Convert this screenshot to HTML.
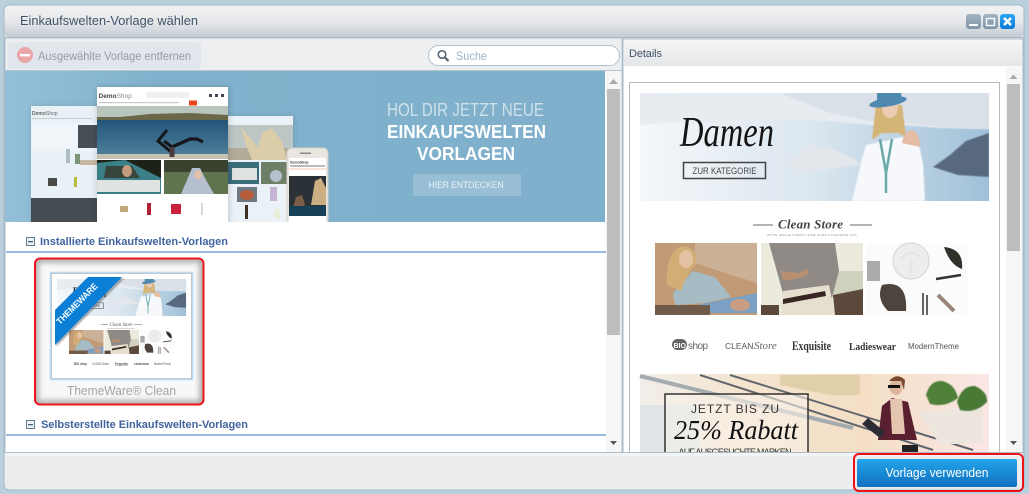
<!DOCTYPE html>
<html><head><meta charset="utf-8"><style>
html,body{margin:0;padding:0;width:1029px;height:494px;overflow:hidden;background:#bad1dd}
svg{display:block;font-family:"Liberation Sans",sans-serif}
</style></head><body>
<svg width="1029" height="494" viewBox="0 0 1029 494" xmlns="http://www.w3.org/2000/svg">
<defs>
<linearGradient id="tb" x1="0" y1="0" x2="0" y2="1"><stop offset="0" stop-color="#f1f2f3"/><stop offset=".5" stop-color="#e6e8ea"/><stop offset="1" stop-color="#c4ccd4"/></linearGradient>
<linearGradient id="tab" x1="0" y1="0" x2="0" y2="1"><stop offset="0" stop-color="#f6f6f7"/><stop offset="1" stop-color="#e5e6e8"/></linearGradient>
<linearGradient id="gc" x1="0" y1="0" x2="0" y2="1"><stop offset="0" stop-color="#a3b4c3"/><stop offset="1" stop-color="#7e94a8"/></linearGradient>
<linearGradient id="xc" x1="0" y1="0" x2="0" y2="1"><stop offset="0" stop-color="#2ba6f2"/><stop offset="1" stop-color="#0b7ad6"/></linearGradient>
<linearGradient id="btn" x1="0" y1="0" x2="0" y2="1"><stop offset="0" stop-color="#24a5ea"/><stop offset="1" stop-color="#0f6fc0"/></linearGradient>
<linearGradient id="sky" x1="0" y1="0" x2="1" y2="0"><stop offset="0" stop-color="#f8f9fb"/><stop offset=".5" stop-color="#e9eef3"/><stop offset="1" stop-color="#c5d7e5"/></linearGradient>
<linearGradient id="wat" x1="0" y1="0" x2="1" y2="0"><stop offset="0" stop-color="#f4f7fa"/><stop offset=".5" stop-color="#dbe6ef"/><stop offset="1" stop-color="#9fc0d8"/></linearGradient>
<linearGradient id="ban" x1="0" y1="0" x2="1" y2="0"><stop offset="0" stop-color="#93c0d8"/><stop offset=".25" stop-color="#82b2cd"/><stop offset="1" stop-color="#7fb0cb"/></linearGradient>
<linearGradient id="sea" x1="0" y1="0" x2="0" y2="1"><stop offset="0" stop-color="#25557a"/><stop offset="1" stop-color="#4d7f9a"/></linearGradient>
<linearGradient id="b2" x1="0" y1="0" x2="1" y2="0"><stop offset="0" stop-color="#f1eeea"/><stop offset=".3" stop-color="#f5e4cf"/><stop offset=".65" stop-color="#f4dfc6"/><stop offset="1" stop-color="#fbe6e6"/></linearGradient>
<filter id="s0" x="-5%" y="-5%" width="110%" height="110%"><feGaussianBlur stdDeviation=".35"/></filter>
<filter id="s1"><feGaussianBlur stdDeviation=".5"/></filter>
<filter id="s2"><feGaussianBlur stdDeviation="1.2"/></filter>
<filter id="s3" x="-20%" y="-20%" width="140%" height="140%"><feGaussianBlur stdDeviation="3"/></filter>
<clipPath id="cb"><rect x="5" y="71" width="600" height="151"/></clipPath>
<clipPath id="cd"><rect x="0" y="0" width="349" height="108"/></clipPath>
<clipPath id="cr"><rect x="630" y="83" width="369" height="369"/></clipPath>
<clipPath id="ct"><rect x="35" y="259" width="168" height="145" rx="5"/></clipPath>
<g id="damen" clip-path="url(#cd)">
  <rect width="349" height="108" fill="url(#wat)"/>
  <path d="M0 0H349V36L300 35 263 32 230 32 190 28 120 26 90 32 50 28 0 32Z" fill="#e7ecf0" filter="url(#s1)"/>
  <path d="M140 0H349V36L300 34 268 30 230 28 190 20Z" fill="#dae0e7" filter="url(#s1)"/>
  <path d="M145 70L170 52 190 55 215 66 220 72 190 76 160 78Z" fill="#e3e6ea" filter="url(#s1)"/>
  <path d="M293 74L310 62 326 48 349 40V84L318 82Z" fill="#58697f" filter="url(#s1)"/>
  <path d="M212 108L222 66 226 52 245 48 262 44 279 52 283 70 285 108Z" fill="#f6f8fb" filter="url(#s1)"/>
  <path d="M232 47L236 12H262L266 44 258 40H242Z" fill="#d5b478" filter="url(#s1)"/>
  <ellipse cx="250" cy="15" rx="8" ry="10" fill="#ecccb2"/>
  <path d="M262 50Q264 38 272 37 280 40 280 54Z" fill="#e4bda4"/>
  <path d="M237 0H261L262 8H237Z" fill="#4f89b0"/>
  <ellipse cx="248" cy="9" rx="19" ry="4.500" fill="#4f89b0" transform="rotate(-10 248 9)"/>
  <path d="M240 46L246 80 252 46M246 80V100" fill="none" stroke="#6aa9aa" stroke-width="2.500"/>
  <text x="40" y="53" font-family="'Liberation Serif',serif" font-style="italic" font-size="42" fill="#141414" textLength="94" lengthAdjust="spacingAndGlyphs">Damen</text>
  <rect x="43.500" y="69.500" width="82" height="16" fill="none" stroke="#444" stroke-width="1.500"/>
  <text x="84.500" y="81" font-size="9.500" fill="#444" text-anchor="middle" textLength="64" lengthAdjust="spacingAndGlyphs">ZUR KATEGORIE</text>
</g>
<g id="p1" filter="url(#s0)">
  <rect width="102" height="72" fill="#c19a76"/>
  <path d="M40 0H102V40L70 30 40 20Z" fill="#cbb197"/>
  <path d="M18 50L38 28 60 34 76 54 50 60 20 62Z" fill="#a6bcc4"/>
  <path d="M12 42Q10 8 28 3 46 6 40 22 30 34 26 48Z" fill="#d2ae76"/>
  <ellipse cx="31" cy="16" rx="7" ry="9" fill="#e4c1a2"/>
  <path d="M42 62L102 50V70L55 70Z" fill="#7c9fc4"/>
  <rect y="62" width="55" height="10" fill="#6f5a48"/>
  <ellipse cx="85" cy="62" rx="10" ry="6" fill="#c99d82"/>
</g>
<g id="p2" filter="url(#s0)">
  <rect width="102" height="72" fill="#ece9dd"/>
  <path d="M66 28H102V55H66Z" fill="#d0d2bf"/>
  <path d="M8 0H74L78 28 70 58H24L18 36Z" fill="#8f8a86"/>
  <path d="M22 48L68 42 74 72H20Z" fill="#e6dfcf"/>
  <path d="M22 56L64 48 65 53 22 61Z" fill="#372820"/>
  <path d="M20 28L38 30 46 26 48 31 40 35 22 38Z" fill="#b98f72"/>
  <rect y="62" width="18" height="10" fill="#5a4a3a"/>
  <path d="M72 52L102 46V72H74Z" fill="#5c4a3a"/>
</g>
<g id="p3" filter="url(#s0)">
  <rect width="103" height="72" fill="#fbfbfb"/>
  <circle cx="45" cy="18" r="18" fill="#eeecec" stroke="#d4d4d4"/>
  <path d="M35 15Q45 5 55 15M45 15V30" fill="none" stroke="#ddd"/>
  <path d="M78 4Q98 6 96 26 84 22 78 4Z" fill="#33302c"/>
  <path d="M16 42Q42 36 40 68H22Q10 56 16 42Z" fill="#4d453c"/>
  <path d="M70 36L95 32" stroke="#333" stroke-width="2.500"/>
  <path d="M72 52L88 68" stroke="#97857a" stroke-width="4"/>
  <rect x="1" y="18" width="13" height="20" fill="#aaa"/>
  <path d="M57 50V72M61 52V72" stroke="#333" stroke-width="1.500"/>
</g>
</defs>

<!-- window -->
<rect x="4" y="5" width="1020" height="485" rx="5" fill="#eaecee" stroke="#a5b7c5"/>
<rect x="4.500" y="6" width="1019" height="31" rx="4" fill="url(#tb)"/>
<rect x="4" y="37" width="1020" height="1" fill="#a7b7c4"/>
<text x="20" y="25" font-size="13" fill="#40546a" textLength="178" lengthAdjust="spacingAndGlyphs">Einkaufswelten-Vorlage wählen</text>

<!-- window controls -->
<rect x="966" y="14" width="15" height="15" rx="3" fill="url(#gc)"/>
<rect x="969" y="24" width="9" height="2" fill="#fff"/>
<rect x="983" y="14" width="15" height="15" rx="3" fill="url(#gc)"/>
<rect x="986.500" y="18.500" width="8" height="7" fill="none" stroke="#fff" stroke-width="1.400"/>
<rect x="1000" y="14" width="15" height="15" rx="3" fill="url(#xc)"/>
<path d="M1004 18L1011 25M1011 18L1004 25" stroke="#fff" stroke-width="2.600"/>

<!-- left panel -->
<rect x="5" y="38" width="617" height="415" fill="#fff" stroke="#a9bac8"/>
<rect x="6" y="39" width="615" height="31" fill="#eceef0"/>
<rect x="5" y="70" width="617" height="1" fill="#b9c3cd"/>
<rect x="8" y="42" width="193" height="27" rx="4" fill="#e1e5ec"/>
<circle cx="25" cy="55" r="8" fill="#eba6a9"/>
<rect x="20" y="54" width="10" height="2.400" fill="#fff"/>
<text x="38" y="60" font-size="12" fill="#989ca1" textLength="153" lengthAdjust="spacingAndGlyphs">Ausgewählte Vorlage entfernen</text>

<rect x="428.500" y="45.500" width="191" height="20" rx="10" fill="#fff" stroke="#b1c1d1"/>
<circle cx="442" cy="54.500" r="3.800" fill="none" stroke="#4e5f70" stroke-width="1.500"/>
<path d="M445 57.500L448.500 61" stroke="#4e5f70" stroke-width="2"/>
<text x="456" y="60" font-size="12" fill="#a0b3c5" textLength="31" lengthAdjust="spacingAndGlyphs">Suche</text>

<!-- promo banner -->
<g clip-path="url(#cb)">
  <rect x="5" y="71" width="600" height="151" fill="url(#ban)"/>
  <!-- left mock -->
  <rect x="31" y="106" width="70" height="122" fill="#000" opacity=".12" filter="url(#s3)"/>
  <g filter="url(#s0)">
  <rect x="31" y="106" width="67" height="116" fill="#e8f1f6"/>
  <text x="32" y="115" font-size="5" font-weight="bold" fill="#666">Demo<tspan font-weight="normal">Shop</tspan></text>
  <rect x="32" y="118" width="60" height="1" fill="#c4cdd2"/>
  <rect x="31" y="123" width="67" height="28" fill="#eff5f8"/>
  <rect x="78" y="125" width="20" height="23" fill="#474f56"/>
  <rect x="66" y="149" width="4" height="14" fill="#aebcc4"/>
  <rect x="80" y="160" width="18" height="5" fill="#c7b8a2"/>
  <rect x="75" y="154" width="5" height="10" fill="#7c9579"/>
  <rect x="48" y="178" width="9" height="8" fill="#4a4a4a"/>
  <rect x="74" y="177" width="3" height="10" fill="#b7bb3c"/>
  <rect x="31" y="198" width="67" height="24" fill="#454d53"/>
  </g>
  <!-- right mock -->
  <rect x="228" y="116" width="66" height="110" fill="#000" opacity=".12" filter="url(#s3)"/>
  <g filter="url(#s0)">
  <rect x="228" y="116" width="65" height="106" fill="#eaf2f7"/>
  <rect x="228" y="125" width="65" height="35" fill="#bcc6c4"/>
  <rect x="228" y="148" width="65" height="12" fill="#b1ab97"/>
  <path d="M241 127L253 142 258 148 262 133 272 128 282 142 287 160H252L246 145Z" fill="#dccda9"/>
  <rect x="228" y="162" width="31" height="22" fill="#3b6c79"/>
  <rect x="232" y="168" width="25" height="12" fill="#dfe3e0"/>
  <rect x="261" y="162" width="26" height="22" fill="#6d7f66"/>
  <circle cx="276" cy="176" r="6" fill="#b7c0cc"/>
  <rect x="237" y="187" width="20" height="15" fill="#707880"/>
  <ellipse cx="247" cy="195" rx="7" ry="5" fill="#b85b3a"/>
  <rect x="270" y="187" width="7" height="14" fill="#c7b4d4"/>
  <rect x="245" y="205" width="3" height="14" fill="#3a3020"/>
  <rect x="274" y="209" width="6" height="10" fill="#e8ecd8"/>
  </g>
  <!-- phone -->
  <rect x="287" y="148" width="41" height="80" rx="5" fill="#e9e6e0" stroke="#d2d0cb"/>
  <rect x="289" y="158" width="37" height="64" fill="#fff"/>
  <rect x="300" y="152.500" width="11" height="1.500" fill="#888"/>
  <text x="290" y="163.500" font-size="3.500" font-weight="bold" fill="#444">DemoShop</text>
  <rect x="290" y="165" width="35" height="2" fill="#bbb"/>
  <rect x="289" y="168" width="37" height="2" fill="#fbe3d8"/>
  <g filter="url(#s0)">
  <rect x="289" y="176" width="37" height="40" fill="#2c3138"/>
  <path d="M311 205L315 181 321 178 326 188V205Z" fill="#cbae82"/>
  <path d="M293 208L296 197 302 195 305 205 300 210Z" fill="#7a5b46"/>
  <rect x="289" y="206" width="37" height="10" fill="#173f55"/>
  </g>
  <!-- central mock -->
  <rect x="97" y="87" width="132" height="140" fill="#000" opacity=".18" filter="url(#s3)"/>
  <rect x="97" y="87" width="131" height="135" fill="#fff"/>
  <text x="98.500" y="98" font-size="6.500" font-weight="bold" fill="#444">Demo<tspan font-weight="normal" fill="#888">Shop</tspan></text>
  <rect x="146" y="92" width="43" height="6" rx="1" fill="#f0f0f0"/>
  <rect x="209" y="94" width="3" height="3" fill="#445"/><rect x="215" y="94" width="3" height="3" fill="#445"/><rect x="221" y="94" width="3" height="3" fill="#445"/>
  <rect x="99" y="102" width="80" height="1.200" fill="#c8c8c8"/>
  <rect x="189" y="100.500" width="8" height="5" fill="#e8431f"/>
  <g filter="url(#s0)">
  <rect x="97" y="106" width="131" height="14" fill="#b9c4bc"/>
  <path d="M97 120V117L120 117 150 114 190 113 228 115V120Z" fill="#6b6848"/>
  <rect x="97" y="120" width="131" height="35" fill="url(#sea)"/>
  <rect x="97" y="154" width="131" height="5" fill="#c6c1b2"/>
  <path d="M171 152L158 141 167 130" fill="none" stroke="#15151a" stroke-width="3"/>
  <path d="M164 141L172 147 190 139 197 139 203 142" fill="none" stroke="#15151a" stroke-width="3.200"/>
  <path d="M172 147L172 157" stroke="#4a3a40" stroke-width="5"/>
  <rect x="97" y="160" width="64" height="34" fill="#1a2119"/>
  <path d="M97 163L125 160 145 170 161 178V194H97Z" fill="#3a7f88"/>
  <path d="M97 180H160V192H97Z" fill="#dfe3e2"/>
  <path d="M106 166H132L140 178H104Z" fill="#39443c"/>
  <ellipse cx="127" cy="171" rx="5" ry="6" fill="#c29c7c"/>
  <rect x="164" y="160" width="64" height="34" fill="#5f7350"/>
  <rect x="164" y="160" width="64" height="12" fill="#38422e"/>
  <path d="M181 194L187 180 192 168 200 168 206 180 214 194Z" fill="#b6bfcf"/>
  <ellipse cx="198" cy="175" rx="3.500" ry="4.500" fill="#e2c3aa"/>
  <rect x="120" y="206" width="8" height="6" fill="#c2a878"/>
  <rect x="147" y="203" width="4" height="12" fill="#b02030"/>
  <rect x="171" y="204" width="10" height="10" fill="#c8203c"/>
  <rect x="201" y="203" width="2" height="12" fill="#d8d8d8"/>
  </g>
  <!-- text -->
  <text x="465.500" y="116" font-size="18" fill="#cfe1eb" text-anchor="middle" textLength="157" lengthAdjust="spacingAndGlyphs">HOL DIR JETZT NEUE</text>
  <text x="466.500" y="138" font-size="18" font-weight="bold" fill="#fff" text-anchor="middle" textLength="159" lengthAdjust="spacingAndGlyphs">EINKAUFSWELTEN</text>
  <text x="466" y="160" font-size="18" font-weight="bold" fill="#fff" text-anchor="middle" textLength="98" lengthAdjust="spacingAndGlyphs">VORLAGEN</text>
  <rect x="413" y="174" width="108" height="22" rx="1" fill="#98bfd6"/>
  <text x="466" y="188" font-size="9.500" fill="#e8f1f6" text-anchor="middle" textLength="75" lengthAdjust="spacingAndGlyphs">HIER ENTDECKEN</text>
</g>

<!-- section headings -->
<rect x="26.500" y="237.500" width="8" height="8" fill="#eef2f5" stroke="#5c7f92"/>
<rect x="28" y="241" width="5" height="1.300" fill="#3f6478"/>
<text x="40" y="245" font-size="11" font-weight="bold" fill="#41649f" textLength="188" lengthAdjust="spacing">Installierte Einkaufswelten-Vorlagen</text>
<rect x="6" y="251" width="600" height="2" fill="#9dbbe2"/>
<rect x="26.500" y="420.500" width="8" height="8" fill="#eef2f5" stroke="#5c7f92"/>
<rect x="28" y="424" width="5" height="1.300" fill="#3f6478"/>
<text x="41" y="428" font-size="11" font-weight="bold" fill="#41649f" textLength="207" lengthAdjust="spacing">Selbsterstellte Einkaufswelten-Vorlagen</text>
<rect x="6" y="434" width="600" height="2" fill="#9dbbe2"/>

<!-- selected tile -->
<rect x="35" y="259" width="168" height="145" rx="5" fill="#f8f8f8"/>
<g clip-path="url(#ct)"><rect x="35" y="259" width="168" height="145" rx="5" fill="none" stroke="#a8a8a8" stroke-width="7" filter="url(#s3)"/></g>
<rect x="50" y="272" width="143" height="108" fill="#a5d4fb" filter="url(#s1)"/>
<rect x="51.500" y="273.500" width="140" height="105" fill="#fff" stroke="#c6c6c6"/>
<g transform="translate(57 279) scale(.37 .343)"><use href="#damen"/></g>
<path d="M101 324.500H108M134 324.500H142" stroke="#999" stroke-width=".7"/>
<text x="121" y="326" font-family="'Liberation Serif',serif" font-size="5" font-style="italic" fill="#555" text-anchor="middle" textLength="23" lengthAdjust="spacing">Clean Store</text>
<rect x="107" y="328" width="28" height=".6" fill="#bbb"/>
<g transform="translate(69 330) scale(.338 .333)"><use href="#p1"/></g>
<g transform="translate(104.500 330) scale(.338 .333)"><use href="#p2"/></g>
<g transform="translate(140 330) scale(.33 .333)"><use href="#p3"/></g>
<g font-size="3.500" fill="#555" font-weight="bold">
  <text x="74" y="365" textLength="13" lengthAdjust="spacingAndGlyphs">BIO shop</text>
  <text x="92" y="365" font-weight="normal" textLength="17" lengthAdjust="spacingAndGlyphs">CLEAN Store</text>
  <text x="115" y="365.500" font-size="4.500" textLength="13" lengthAdjust="spacingAndGlyphs">Exquisite</text>
  <text x="134" y="365" textLength="15" lengthAdjust="spacingAndGlyphs">Ladieswear</text>
  <text x="154" y="365" font-weight="normal" textLength="17" lengthAdjust="spacingAndGlyphs">ModernTheme</text>
</g>
<path d="M55 313L91 277H123L55 345Z" fill="#666" opacity=".5" transform="translate(1.500 1.500)" filter="url(#s1)"/>
<path d="M55 310L88 277H122L55 345Z" fill="#0b7fd6"/>
<text transform="translate(60 325) rotate(-45)" font-size="9" font-weight="bold" fill="#fff" textLength="54" lengthAdjust="spacingAndGlyphs">THEMEWARE</text>
<text x="121.500" y="395" font-size="13" fill="#a0a4a8" text-anchor="middle" textLength="109" lengthAdjust="spacingAndGlyphs">ThemeWare® Clean</text>
<rect x="35" y="258.500" width="168.500" height="146" rx="5" fill="none" stroke="#f0141c" stroke-width="2"/>

<!-- left scrollbar -->
<rect x="606" y="71" width="15" height="381" fill="#f6f6f6"/>
<rect x="607" y="89" width="13" height="246" fill="#bdbdbd"/>
<path d="M609 84L613.500 79 618 84Z" fill="#a9a9a9"/>
<path d="M610 441H617L613.500 445Z" fill="#555"/>

<!-- right panel -->
<rect x="623" y="39" width="400" height="414" fill="#fff" stroke="#a9bac8"/>
<rect x="624" y="40" width="398" height="26" fill="url(#tab)"/>
<text x="629" y="57" font-size="11" fill="#3f5269" textLength="33" lengthAdjust="spacing">Details</text>
<rect x="629.500" y="82.500" width="370" height="380" fill="#fff" stroke="#b2bac2"/>
<g clip-path="url(#cr)">
  <use href="#damen" x="640" y="93"/>
  <path d="M753 225H773M850 225H872" stroke="#888" stroke-width="1.300"/>
  <text x="778" y="228.500" font-family="'Liberation Serif',serif" font-style="italic" font-weight="bold" font-size="13" fill="#444" textLength="65" lengthAdjust="spacing">Clean Store</text>
  <text x="812" y="236" font-size="2.800" fill="#888" text-anchor="middle" textLength="89" lengthAdjust="spacing">BITTE WAHLE ZUERST EINE SHOP-KATEGORIE AUS</text>
  <use href="#p1" x="655" y="243"/>
  <use href="#p2" x="761" y="243"/>
  <use href="#p3" x="866" y="243"/>
  <g fill="#333">
    <rect x="672" y="339" width="15" height="11" rx="5.500" fill="#666"/>
    <text x="688" y="349" font-size="10" fill="#666" textLength="20" lengthAdjust="spacing">shop</text>
    <text x="673.500" y="348" font-size="7" font-weight="bold" fill="#fff">BIO</text>
    <text x="725" y="349" font-size="8.500" fill="#555">CLEAN</text>
    <text x="754" y="349" font-family="'Liberation Serif',serif" font-style="italic" font-size="11" fill="#666">Store</text>
    <text x="792" y="350" font-family="'Liberation Serif',serif" font-weight="bold" font-size="12.500" fill="#333" textLength="39" lengthAdjust="spacingAndGlyphs">Exquisite</text>
    <text x="849" y="350" font-family="'Liberation Serif',serif" font-weight="bold" font-size="11" fill="#333" textLength="47" lengthAdjust="spacingAndGlyphs">Ladieswear</text>
    <text x="908" y="349" font-size="8.500" fill="#555" textLength="51" lengthAdjust="spacingAndGlyphs">ModernTheme</text>
  </g>
  <!-- second banner -->
  <rect x="640" y="374" width="349" height="80" fill="url(#b2)"/>
  <path d="M640 405H700V455H640Z" fill="#dfe4e6"/>
  <path d="M780 375H860V395L830 395 780 385Z" fill="#e0cfa8" filter="url(#s1)"/>
  <path d="M700 375L933 450M730 375L973 450" stroke="#60666c" stroke-width="2"/>
  <path d="M640 376L853 428" stroke="#a5acb0" stroke-width="4"/>
  <rect x="665" y="394" width="143" height="62" fill="#f8f2ea" fill-opacity=".6" stroke="#333" stroke-width="1.500"/>
  <text x="735" y="413" font-size="12" fill="#333" text-anchor="middle" textLength="88" lengthAdjust="spacing">JETZT BIS ZU</text>
  <text x="736" y="439" font-family="'Liberation Serif',serif" font-style="italic" font-size="27" fill="#111" text-anchor="middle" textLength="124" lengthAdjust="spacingAndGlyphs">25% Rabatt</text>
  <text x="735" y="455" font-size="9" fill="#333" text-anchor="middle" textLength="113" lengthAdjust="spacing">AUF AUSGESUCHTE MARKEN</text>
  <path d="M918 412L983 407V442L940 445Z" fill="#ece6de"/>
  <path d="M878 440L882 406 892 398 908 402 917 440Z" fill="#5a2030"/>
  <path d="M890 399H902L905 434H892Z" fill="#e4c5b0"/>
  <ellipse cx="896" cy="387" rx="6.500" ry="8" fill="#dcb59b"/>
  <path d="M889 381Q897 372 905 380L904 390 901 381H892Z" fill="#7a4a30"/>
  <rect x="888" y="385" width="12" height="3" fill="#111"/>
  <path d="M868 418L885 432 880 438 862 424Z" fill="#2c2c34"/>
  <path d="M926 395Q930 380 942 381 955 384 958 398 945 408 930 404Z" fill="#4f8038" filter="url(#s1)"/>
  <path d="M957 402Q962 385 975 386 988 392 987 402 975 414 960 410Z" fill="#4a7a36" filter="url(#s1)"/>
  <path d="M902 445H918V454H902Z" fill="#222"/>
</g>
<!-- right scrollbar -->
<rect x="1006" y="67" width="16" height="385" fill="#f6f6f6"/>
<rect x="1007" y="84" width="13" height="167" fill="#bdbdbd"/>
<path d="M1009.500 79L1013.500 74.500 1017.500 79Z" fill="#a9a9a9"/>
<path d="M1010 441H1017L1013.500 445Z" fill="#555"/>

<!-- bottom bar -->
<rect x="5" y="453" width="1018" height="36" rx="3" fill="#eaecee"/>
<rect x="5" y="452" width="1018" height="1" fill="#a9bac8"/>
<rect x="5" y="453" width="1018" height="3" fill="#f3f4f5"/>
<rect x="857" y="459" width="160" height="28" rx="2" fill="url(#btn)"/>
<text x="937" y="477" font-size="12.500" fill="#fff" text-anchor="middle" textLength="103" lengthAdjust="spacingAndGlyphs">Vorlage verwenden</text>
<rect x="854" y="454" width="169" height="37" rx="5" fill="none" stroke="#ee1019" stroke-width="2"/>
</svg>
</body></html>
